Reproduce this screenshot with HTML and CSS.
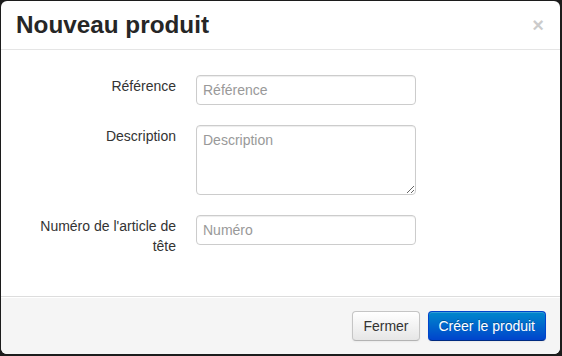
FILE: index.html
```html
<!DOCTYPE html>
<html>
<head>
    <link rel="stylesheet" href="styles.css">
</head>
<body>
    <div class="modal">
        <div class="modal-header">
            <h3>Nouveau produit</h3>
            <button class="close">&times;</button>
        </div>
        <form class="modal-body">
            <div class="control-group">
                <label class="control-label" for="reference">Référence</label>
                <div class="controls">
                    <input type="text" id="reference" placeholder="Référence">
                </div>
            </div>
            <div class="control-group">
                <label class="control-label" for="description">Description</label>
                <div class="controls">
                    <textarea id="description" rows="3" placeholder="Description"></textarea>
                </div>
            </div>
            <div class="control-group">
                <label class="control-label" for="numero">Numéro de l'article de tête</label>
                <div class="controls">
                    <input type="text" id="numero" placeholder="Numéro">
                </div>
            </div>
        </form>
        <div class="modal-footer">
            <button class="btn">Fermer</button>
            <button class="btn btn-primary">Créer le produit</button>
        </div>
    </div>
</body>
</html>
```

FILE: styles.css
```css
html, body {
    margin: 0;
    height: 100%;
}
body {
    background: #1c1c1c;
    font-family: "Liberation Sans", Arial, sans-serif;
    font-size: 14px;
    line-height: 20px;
    color: #333;
    padding: 1px 2px 2px 1px;
    box-sizing: border-box;
}
.modal {
    background: #fff;
    border-radius: 6px;
    height: 100%;
    display: flex;
    flex-direction: column;
    overflow: hidden;
}
.modal-header {
    display: flex;
    align-items: center;
    justify-content: space-between;
    padding: 9px 15px;
    border-bottom: 1px solid #e5e5e5;
}
.modal-header h3 {
    margin: 0;
    font-size: 24.3px;
    line-height: 30px;
    font-weight: bold;
    color: #262626;
}
.close {
    background: none;
    border: none;
    padding: 0;
    margin-right: 1px;
    font-family: inherit;
    font-size: 20px;
    font-weight: bold;
    line-height: 20px;
    color: #000;
    opacity: 0.2;
}
.modal-body {
    flex: 1;
    padding: 25px 15px 15px;
    margin: 0;
}
.control-group {
    display: flex;
    margin-bottom: 20px;
}
.control-label {
    width: 160px;
    text-align: right;
    padding-top: 1px;
    margin-right: 20px;
    color: #333;
}
input[type="text"], textarea {
    width: 206px;
    padding: 4px 6px;
    border: 1px solid #ccc;
    border-radius: 4px;
    font-family: inherit;
    font-size: 14px;
    line-height: 20px;
    height: 20px;
    color: #555;
    box-shadow: inset 0 1px 1px rgba(0,0,0,0.075);
    margin: 0;
    display: block;
}
textarea {
    height: 60px;
    resize: vertical;
}
::placeholder {
    color: #999;
}
.modal-footer {
    display: flex;
    justify-content: flex-end;
    gap: 8px;
    padding: 14px 14px 13px;
    background: #f5f5f5;
    border-top: 1px solid #ddd;
    box-shadow: inset 0 1px 0 #fff;
}
.btn {
    font-family: inherit;
    font-size: 14px;
    line-height: 20px;
    padding: 4px 10px;
    border-radius: 4px;
    border: 1px solid #c5c5c5;
    border-bottom-color: #b3b3b3;
    color: #333;
    background: linear-gradient(#ffffff, #e6e6e6);
    box-shadow: inset 0 1px 0 rgba(255,255,255,0.2), 0 1px 2px rgba(0,0,0,0.05);
}
.btn-primary {
    color: #fff;
    border-color: #0044cc #0044cc #002a80;
    background: linear-gradient(#0088cc, #0044cc);
    text-shadow: 0 -1px 0 rgba(0,0,0,0.25);
}
```
